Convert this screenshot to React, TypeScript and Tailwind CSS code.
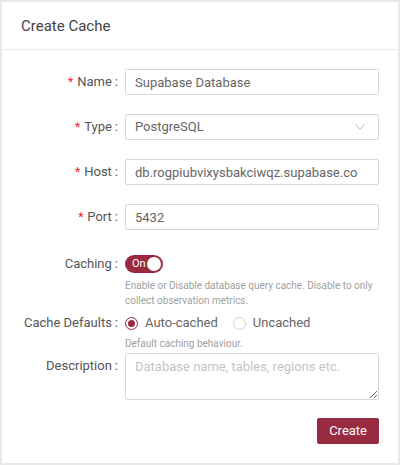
import { useState } from "react";

function Label({ text, required }: { text: string; required?: boolean }) {
  return (
    <div className="flex h-[26px] items-center justify-end text-[13px] text-[#555]">
      {required && <span className="mr-1 text-[12px] text-[#f5222d]">*</span>}
      <span>{text}</span>
      <span className="ml-[3px] mr-[7px]">:</span>
    </div>
  );
}

export default function App() {
  const [caching, setCaching] = useState(true);
  const [mode, setMode] = useState("auto");

  return (
    <div
      className="h-[465px] w-[400px] bg-white"
      style={{ fontFamily: "Roboto, 'Liberation Sans', sans-serif" }}
    >
      <div className="flex h-full flex-col border-2 border-[#e8e8e8]">
        {/* Header */}
        <div className="flex h-[48px] items-center border-b border-[#e8e8e8] px-[19px] pt-[1px] text-[15px] text-[#444]">
          Create Cache
        </div>

        {/* Form */}
        <div className="grid grid-cols-[123px_254px] pt-[19px]">
          <Label text="Name" required />
          <input
            className="mb-[19px] h-[26px] rounded-[2px] border border-[#d9d9d9] px-[9px] text-[13px] text-[#666] outline-none"
            defaultValue="Supabase Database"
          />

          <Label text="Type" required />
          <div className="mb-[19px] flex h-[26px] items-center justify-between rounded-[2px] border border-[#d9d9d9] px-[9px] text-[13px] text-[#666]">
            <span>PostgreSQL</span>
            <svg width="10" height="6" viewBox="0 0 10 6" className="mr-[4px]">
              <path d="M0.5 0.5 L5 5 L9.5 0.5" fill="none" stroke="#bdbdbd" strokeWidth="1" />
            </svg>
          </div>

          <Label text="Host" required />
          <input
            className="mb-[19px] h-[26px] rounded-[2px] border border-[#d9d9d9] px-[9px] text-[13px] text-[#666] outline-none"
            defaultValue="db.rogpiubvixysbakciwqz.supabase.co"
          />

          <Label text="Port" required />
          <input
            className="mb-[21px] h-[26px] rounded-[2px] border border-[#d9d9d9] px-[9px] text-[13px] text-[#666] outline-none"
            defaultValue="5432"
          />

          <Label text="Caching" />
          <div className="mb-[2px]">
            <div className="flex h-[26px] items-center">
              <button
                onClick={() => setCaching(!caching)}
                className={`flex h-[18px] w-[38px] items-center justify-between rounded-full pl-[7px] pr-[2px] text-[11px] text-white ${caching ? "bg-[#9b2940]" : "bg-[#bfbfbf]"}`}
              >
                <span>{caching ? "On" : "Off"}</span>
                <span className="h-[14px] w-[14px] rounded-full bg-white" />
              </button>
            </div>
            <div className="pt-[1px] text-[10px] leading-[15px] text-[#a0a0a0]">
              Enable or Disable database query cache. Disable to only collect observation metrics.
            </div>
          </div>

          <Label text="Cache Defaults" />
          <div className="mb-[2px]">
            <div className="flex h-[26px] items-center gap-[7px] text-[13px] text-[#666]">
              {[
                { key: "auto", label: "Auto-cached" },
                { key: "none", label: "Uncached" },
              ].map((o) => (
                <label key={o.key} className="mr-[8px] flex cursor-pointer items-center gap-[7px]" onClick={() => setMode(o.key)}>
                  <span
                    className={`flex h-[13px] w-[13px] items-center justify-center rounded-full border ${mode === o.key ? "border-[#9b2940]" : "border-[#d0d0d0]"}`}
                  >
                    {mode === o.key && <span className="h-[7px] w-[7px] rounded-full bg-[#9b2940]" />}
                  </span>
                  <span>{o.label}</span>
                </label>
              ))}
            </div>
            <div className="text-[10px] leading-[15px] text-[#a0a0a0]">Default caching behaviour.</div>
          </div>

          <Label text="Description" />
          <textarea
            className="mb-[18px] h-[47px] rounded-[2px] border border-[#d9d9d9] px-[9px] py-[4px] text-[13px] leading-[18px] text-[#666] outline-none placeholder:text-[#c4c4c4]"
            placeholder="Database name, tables, regions etc."
          />

          <div />
          <div className="flex justify-end">
            <button className="h-[26px] rounded-[2px] bg-[#982b40] px-[12px] text-[13px] text-white">
              Create
            </button>
          </div>
        </div>
      </div>
    </div>
  );
}
